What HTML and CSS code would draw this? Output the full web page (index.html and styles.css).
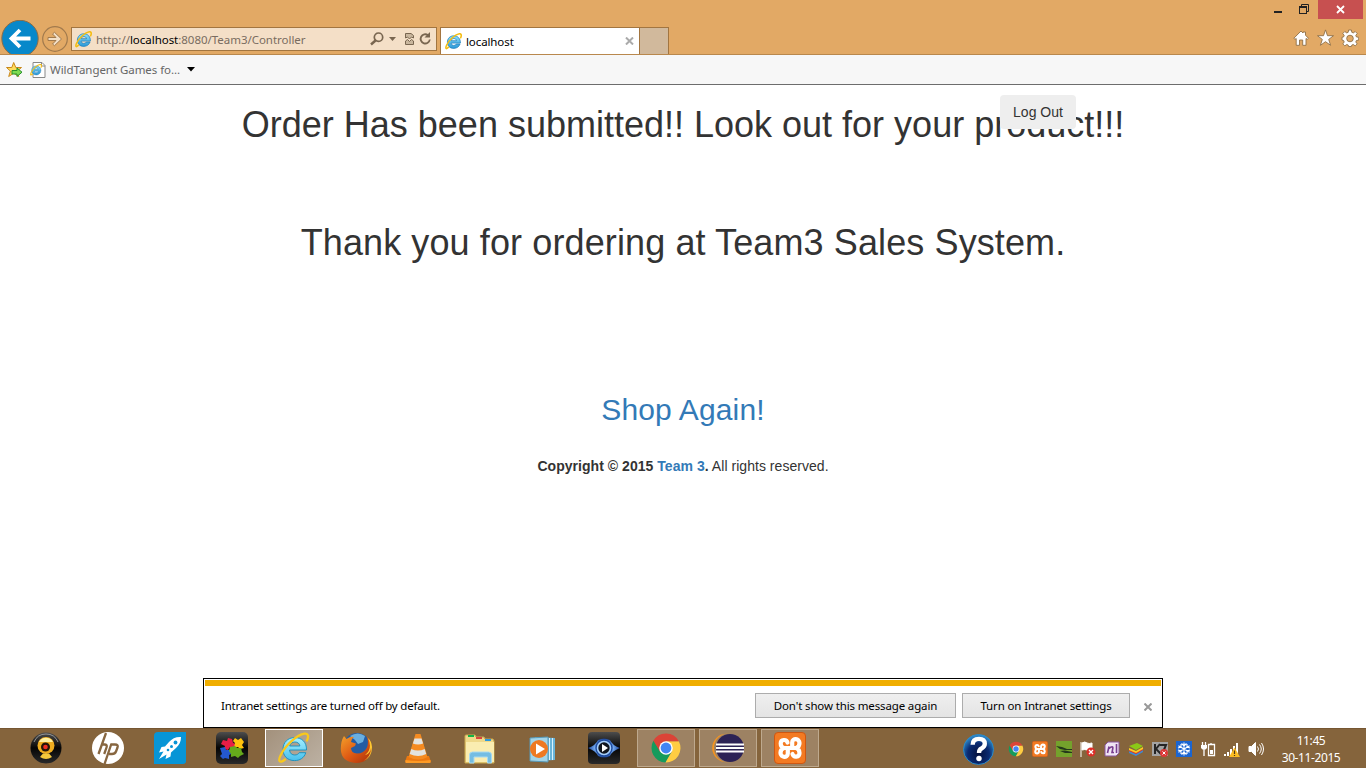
FILE: index.html
```html
<!DOCTYPE html>
<html lang="en">
<head>
<meta charset="utf-8">
<title>localhost</title>
<link rel="stylesheet" href="styles.css">
</head>
<body>
<svg class="defs" width="0" height="0" aria-hidden="true">
  <defs>
    <linearGradient id="gBlue" x1="0" y1="0" x2="0" y2="1"><stop offset="0" stop-color="#8ee0fa"/><stop offset="1" stop-color="#2998d8"/></linearGradient>
    <linearGradient id="gCyan" x1="0" y1="0" x2="0" y2="1"><stop offset="0" stop-color="#a5f0ff"/><stop offset="1" stop-color="#48c0ec"/></linearGradient>
    <linearGradient id="gFox" x1="0" y1="0" x2="1" y2="1"><stop offset="0" stop-color="#f4a02a"/><stop offset=".5" stop-color="#df5b14"/><stop offset="1" stop-color="#a82f0a"/></linearGradient>
    <linearGradient id="gBlack" x1="0" y1="0" x2="0" y2="1"><stop offset="0" stop-color="#4d4d4d"/><stop offset=".5" stop-color="#050505"/><stop offset="1" stop-color="#2a2a2a"/></linearGradient>
    <radialGradient id="gHelp" cx=".5" cy=".65" r=".6"><stop offset="0" stop-color="#04103c"/><stop offset=".6" stop-color="#0a2b72"/><stop offset="1" stop-color="#2b83c6"/></radialGradient>
    <radialGradient id="gEye"><stop offset="0" stop-color="#fff"/><stop offset=".6" stop-color="#6fa6ee"/><stop offset="1" stop-color="#173b8c"/></radialGradient>
  </defs>
  <symbol id="ie" viewBox="0 0 32 32">
    <path d="M29 19H11.500c.4 3 2.500 4.300 5 4.300 2.200 0 3.800-.8 4.700-2.500h7.100c-1.800 5.300-6.300 8.200-12 8.200C9 29 4.500 24 4.500 17.300 4.500 10.300 9.500 5.300 16.500 5.300c7.500 0 12.700 5 12.500 13.700zM11.700 14.500h10c-.3-2.400-2.200-4-5-4s-4.600 1.500-5 4z" fill="url(#gBlue)" stroke="#1b7dbb" stroke-width="1.400"/>
    <path d="M6.500 26.500c-4 5-6.500 3.300-3.500-3.500C8 12 20 2.500 27 1.500c4-.5 4.300 3 2.500 7.500" fill="none" stroke="#f4bd13" stroke-width="3" stroke-linecap="round"/>
  </symbol>
  <symbol id="ieBig" viewBox="0 0 32 32">
    <path d="M28.500 18H11.500c.4 3.500 2.600 5 5.200 5 2.200 0 3.600-.9 4.500-2.300h6.600c-1.700 5.200-6 7.900-11.300 7.900C9.500 28.600 5 24 5 17.300 5 10.500 9.800 5.600 16.600 5.600c7.300 0 12.100 4.400 11.900 12.400zM11.700 14h10.200c-.3-2.500-2.300-4-5-4s-4.700 1.500-5.200 4z" fill="url(#gCyan)" stroke="#168dbd" stroke-width=".9"/>
    <path d="M7 27.500c-5.500 4.500-7.500 1.500-4-5C8 12.500 19 3 26.500 1.700c4-.6 4.300 2.800 2.500 6.800" fill="none" stroke="#f9c81c" stroke-width="2.300" stroke-linecap="round"/>
  </symbol>
  <symbol id="chrome" viewBox="0 0 32 32">
    <path d="M16 16L3.400 8.800A14.500 14.500 0 0 0 15.500 30.500l6.200-11z" fill="#159b5c"/>
    <path d="M16 9.200h12.800A14.500 14.500 0 0 1 15.500 30.500l6.400-11z" fill="#ffcd42"/>
    <path d="M3.400 8.800L9.900 19.500 16 16V9.200h12.800a14.500 14.500 0 0 0-25.400-.4z" fill="#db4437"/>
    <circle cx="16" cy="16" r="6.800" fill="#fff"/><circle cx="16" cy="16" r="5.400" fill="#4285f4"/>
  </symbol>
  <symbol id="xampp" viewBox="0 0 32 32">
    <rect x=".5" y=".5" width="31" height="31" rx="3.500" fill="#f37a22" stroke="#ce5712"/>
    <g fill="none" stroke="#fff" stroke-width="4.200" stroke-linecap="round" stroke-linejoin="round">
      <path d="M13.500 10.500C12.500 7 6.700 7 6.700 11.500c0 2.500 1.300 4 3.300 4.500-2.300.8-3.500 2.700-3.500 5 0 5 7.300 5 7.300.5v-4"/>
      <path d="M18.200 14.500v-4c0-4.500 7.300-4.500 7.300.5 0 2.500-1.200 4.200-3.500 5 2 .5 3.500 2.300 3.500 5 0 4.500-6 4.700-7 1"/>
      <path d="M10 16h12"/>
    </g>
  </symbol>
</svg>

<div class="screen">
  <header class="browser">
    <div class="captions">
      <svg class="min" width="8" height="3"><rect width="8" height="2" fill="#222"/></svg>
      <svg class="restore" width="11" height="11" viewBox="0 0 11 11" fill="none" stroke="#222"><path d="M2.500 2V.5h7v7H8"/><rect x=".5" y="2.500" width="7" height="7"/><path d="M0 3.500h8"/></svg>
      <span class="close"><svg width="9" height="9" viewBox="0 0 9 9" stroke="#fff" stroke-width="1.800"><path d="M1 1l7 7M8 1L1 8"/></svg></span>
    </div>
    <div class="nav">
      <svg class="back" width="39" height="34" viewBox="0 0 39 34"><circle cx="19" cy="18.500" r="18.200" fill="#0788ca" stroke="#8c6c45"/><path d="M29.500 18.500H11.500M19 10l-8.500 8.500 8.500 8.500" fill="none" stroke="#fff" stroke-width="3.800"/></svg>
      <svg class="forward" width="26" height="26" viewBox="0 0 26 26"><circle cx="13" cy="13" r="12.300" fill="none" stroke="#a17a4d" stroke-width="1.200"/><path d="M6 11.500h8L10.500 8l2-1.700L19.500 13l-7 6.700-2-1.700 3.500-3.500H6z" fill="#f3dfc6" stroke="#a17a4d"/></svg>
      <div class="address">
        <svg class="favicon" width="17" height="17"><use href="#ie"/></svg>
        <span class="url">http://<b>localhost</b>:8080/Team3/Controller</span>
        <svg class="tools" width="64" height="16" viewBox="0 0 64 16" fill="none" stroke="#796650">
          <circle cx="8.500" cy="6.200" r="4.200" stroke-width="1.700"/><path d="M5.500 9.500L1 13.500" stroke-width="2.400"/>
          <path d="M19 6h7l-3.500 4z" fill="#796650" stroke="none"/>
          <path d="M35.500 7V2.500h5.500l2.500 2V7l-2-1-2 2-2-2zM35.500 10l2-1.500 2 2 2-2 2 1.500v3.500h-8z" fill="#c9b69d"/>
          <path d="M58 4.200A4.600 4.600 0 1 0 59.800 8.500" stroke-width="1.800"/><path d="M60 1v5.500h-5.500z" fill="#796650" stroke="none"/>
        </svg>
      </div>
      <div class="tab"><svg class="favicon" width="17" height="17"><use href="#ie"/></svg><span>localhost</span><svg class="x" width="9" height="8" viewBox="0 0 9 8" stroke="#aaa" stroke-width="2"><path d="M1 .5l7 7M8 .5l-7 7"/></svg></div>
      <div class="newtab"></div>
      <svg class="commands" width="66" height="18" viewBox="0 0 66 18" fill="#fff" stroke="#8e7048" stroke-width=".9">
        <path d="M.8 9.300L8 2l2 2V3h2.500v3.200l3 3.100-1.200 1-1.300-.8v6.800H9.700V11H6.500v5.300H3.200V9.500L2 10.300z"/>
        <path d="M32.500.9l2 5.800h6l-4.800 3.700 1.900 5.900-5.100-3.600-5.100 3.600 1.900-5.900-4.800-3.700h6z"/>
        <path fill-rule="evenodd" d="M55.600 1h2.800l.4 2.300 1.500.6 1.900-1.400 2 2-1.400 1.900.6 1.500 2.300.4v2.800l-2.300.4-.6 1.500 1.400 1.900-2 2-1.900-1.400-1.500.6-.4 1.400h-2.800l-.4-1.400-1.500-.6-1.900 1.400-2-2 1.400-1.900-.6-1.500-1.600-.4V8.300l1.600-.4.6-1.500-1.400-1.900 2-2 1.900 1.400 1.500-.6zM57 6.200a3.300 3.300 0 1 0 0 6.600 3.300 3.300 0 0 0 0-6.600z"/>
      </svg>
    </div>
  </header>

  <div class="favorites">
    <svg width="18" height="18" viewBox="0 0 18 18"><path d="M7.700 1.500l2.100 5h5.700l-4.300 3.600 1.600 5.400-5.100-3.300-5 3.300 1.700-5.400L.5 6.500h5.300z" fill="#fedc5b" stroke="#c9871b"/><path d="M6 9.500h5V7l5 4.200-5 4.300V13H6z" fill="#7ddb51" stroke="#27902c"/></svg>
    <svg width="16" height="16" viewBox="0 0 16 16"><path d="M3 .5h9l3 3v12H3z" fill="#fff" stroke="#888"/><path d="M11.500.5v3.500H15" fill="none" stroke="#888"/><use href="#ie" x="0" y="2" width="12" height="12"/></svg>
    <span class="link">WildTangent Games fo...</span>
    <svg width="8" height="5"><path d="M0 0h8L4 4.500z"/></svg>
  </div>

  <main class="page">
    <button class="logout">Log Out</button>
    <h1>Order Has been submitted!! Look out for your product!!!</h1>
    <h1 class="thanks">Thank you for ordering at Team3 Sales System.</h1>
    <h2><a>Shop Again!</a></h2>
    <p class="copyright"><strong>Copyright © 2015 <a>Team 3</a>.</strong> All rights reserved.</p>
    <div class="notice">
      <div class="stripe"></div>
      <div class="notice-row">
        <span class="message">Intranet settings are turned off by default.</span>
        <button class="dont">Don't show this message again</button>
        <button class="turn">Turn on Intranet settings</button>
        <svg width="8" height="8" viewBox="0 0 8 8" stroke="#999" stroke-width="2"><path d="M.5.5l7 7M7.500.5l-7 7"/></svg>
      </div>
    </div>
  </main>

  <footer class="taskbar">
    <div class="apps">
      <span><svg viewBox="0 0 32 32"><circle cx="16" cy="16" r="15.500" fill="url(#gBlack)"/><path d="M4 10a13 13 0 0 1 24 0" fill="none" stroke="#aaa" stroke-width=".8"/><circle cx="16" cy="13.500" r="8.500" fill="#edac20"/><path d="M9 10a8 8 0 0 1 14 0" fill="#fff1a0"/><circle cx="15.500" cy="15" r="4.500" fill="#261708"/><circle cx="15.500" cy="15" r="2.300" fill="#ef2f22"/><path d="M13 21.500h6l3 3.500q-6 4-12 0z" fill="#f4c83c"/></svg></span>
      <span><svg viewBox="0 0 32 32"><circle cx="16" cy="16" r="16" fill="#fff"/><path d="M14 1L6.500 22M9.500 12.500h3q3 0 2 3L12.200 22M19.500 11.500L12.500 32M19 12.500h4q3.500 0 2.500 3l-1.500 4q-1 2.500-4 2.500h-3" fill="none" stroke="#876640" stroke-width="2.300"/></svg></span>
      <span><svg viewBox="0 0 32 32"><path d="M4 0h28v29q0 3-3 3H0V4q0-4 4-4z" fill="#0795d6"/><path d="M27 5c-5-.3-9 1.500-12 5L11 14.500 7.500 15 5 20.500l4.500-1L5 27l7.500-4.500-1 4.500 5-2.500.5-4 5-4.500c3.500-3.500 5-6.500 5-11z" fill="#fff"/><g fill="#0795d6"><circle cx="21.500" cy="10.500" r="1.900"/><circle cx="17.500" cy="14.500" r="1.500"/><circle cx="14" cy="18" r="1.300"/></g></svg></span>
      <span><svg viewBox="0 0 32 32"><rect width="32" height="32" rx="5" fill="url(#gBlack)"/><path d="M7 8l4 1 1-3 4 1 1 4 3 1-2 4-4-1-2 3-4-1 1-3-4-2z" fill="#e81d46"/><path d="M19 6l3 2 3-2 3 4-2 3 2 3-4 1-2-2-4 1 1-5-2-2z" fill="#ffc20d"/><path d="M4 16l5-1 1 3 4 0 1 4-2 1 0 4-4-1-2 1-3-3 2-2z" fill="#2458ce"/><path d="M14 15l5-1 2 2 4 0 1 4 2 2-4 2-2 2-3-2-4 1 0-3-2-3z" fill="#65a91b"/></svg></span>
      <span class="active"><svg viewBox="0 0 32 32"><use href="#ieBig"/></svg></span>
      <span><svg viewBox="0 0 32 32"><circle cx="17" cy="14.500" r="13.500" fill="#245ca3"/><path d="M10 4q8-5 15 0l-2 6-5 2-3-4z" fill="#6aafdf"/><path d="M4 4l2.500 3q4-3 7.500-2-3 2-3 5l5 1.500-1 2.500-4 2q0 5 6 5.500 7 0 10-6 2-5 0-11 4.500 5 4.500 12Q30 31 16 31 1 30 .8 17 .8 9 4 4z" fill="url(#gFox)"/><path d="M28 6q5 11-3 17 5-1 6-7 0 9-8 13 9-3 9-14-.5-6-4-9z" fill="#ffc831"/></svg></span>
      <span><svg viewBox="0 0 32 32"><path d="M5 24h22l2 6H3z" fill="#ec7810"/><path d="M13.500 2h5l7 23q-9 5-19 0z" fill="#f58b21"/><path d="M12.500 6.500h7l1.600 5q-5 2-10.200 0zM9.300 17q6.700 3 13.400 0l1.500 5q-8 4-16.500 0z" fill="#e3e3df"/><path d="M3.500 28q12.500 2 25 0v3h-25z" fill="#ff9b24"/></svg></span>
      <span><svg viewBox="0 0 32 32"><path d="M1 4q0-1 1-1h9l1 2h8l1 2h8l1 2v22H1z" fill="#efd98a" stroke="#c9a84f"/><path d="M4 4h6" stroke="#12b347" stroke-width="2"/><path d="M12 6h6" stroke="#d9453e" stroke-width="2"/><path d="M21 8h6" stroke="#2c99dd" stroke-width="2"/><path d="M2 10h28v20H2z" fill="#faedb1"/><path d="M5.500 31V23q0-3 3-3h16q3 0 3 3v8h-4v-6H10v6z" fill="#74bde3" stroke="#a8daf1"/></svg></span>
      <span><svg viewBox="0 0 32 32"><path d="M9 5l20 1v22l-20 1z" fill="#69b5da"/><path d="M26.500 6v22M23.500 6v22" stroke="#d8f3ff"/><path d="M4 6l18-1v25l-18-1z" fill="#a2d4e8" stroke="#5799b7"/><circle cx="13" cy="17" r="9" fill="#ee7922"/><path d="M10 11.500l9 5.500-9 5.500z" fill="#fff"/></svg></span>
      <span><svg viewBox="0 0 32 32"><rect width="32" height="32" rx="4" fill="url(#gBlack)"/><path d="M0 16Q8 13 10 8q6-3 12 0 2 5 10 8-8 3-10 8-6 3-12 0-2-5-10-8z" fill="url(#gEye)"/><circle cx="16" cy="16" r="8" fill="#a7cffb" stroke="#1f4ca0" stroke-width="1.500"/><circle cx="16" cy="16" r="5.700" fill="#10151f"/><path d="M14 12l6 4-6 4z" fill="#fff"/></svg></span>
      <span class="open"><svg viewBox="0 0 32 32"><use href="#chrome"/></svg></span>
      <span class="open"><svg viewBox="0 0 32 32"><circle cx="14.500" cy="16" r="14.300" fill="#f7941e"/><circle cx="16.500" cy="16" r="14.500" fill="#9d8263"/><circle cx="18" cy="16" r="14" fill="#2c2255"/><path d="M4 12.500h28M4 16h28M4 19.500h28" stroke="#fff" stroke-width="1.900"/></svg></span>
      <span class="open"><svg viewBox="0 0 32 32"><use href="#xampp"/></svg></span>
    </div>
    <svg class="help" viewBox="0 0 32 32"><circle cx="16" cy="16" r="15.500" fill="url(#gHelp)" stroke="#2d8bc5"/><path d="M10 11q0-6 6.500-6 6 0 6 5 0 3-3.500 5-2.500 1.300-2.500 4.500" fill="none" stroke="#fff" stroke-width="4.500"/><circle cx="16.500" cy="25.200" r="2.800" fill="#fff"/></svg>
    <div class="tray">
      <svg viewBox="0 0 32 32"><use href="#chrome"/></svg>
      <svg viewBox="0 0 32 32"><use href="#xampp"/></svg>
      <svg viewBox="0 0 16 16"><path d="M0 0h16v16H0z" fill="#74a22c"/><path d="M0 5l6 1 5 2h5v1H9L4 8zM4 10l5-.5 7 1.500v1H9z" fill="#25391b"/></svg>
      <svg viewBox="0 0 16 16"><path d="M1 1v15M2 2q3-2 5 0 2 1 5 0v7q-3 1-5 0-2-1-5 0z" fill="#fff" stroke="#fff"/><circle cx="11" cy="11" r="4.500" fill="#dc2f28"/><path d="M9 9l4 4m0-4l-4 4" stroke="#fff" stroke-width="1.300"/></svg>
      <svg viewBox="0 0 16 16"><path d="M4 1h11v11l-3 3H1V4z" fill="#f0e4f4" stroke="#8a569d"/><path d="M12.500 3v9M5 5.500L3.500 12M4.800 7.500q4.500-3.500 4 0L8 11.500h2" fill="none" stroke="#793e90" stroke-width="1.600"/></svg>
      <svg viewBox="0 0 16 16"><path d="M1 10l7 3 7-4v2l-7 4-7-3z" fill="#4089cf"/><path d="M1 8l7 3 7-4v2l-7 4-7-3z" fill="#e03830"/><path d="M1 7l7 3 7-4v2l-7 4-7-3z" fill="#f7cf21"/><path d="M1 5l8-3 6 3-7 4z" fill="#8bc817"/></svg>
      <svg viewBox="0 0 16 16"><path d="M0 1h16v14H0z" fill="#a3a3a3"/><path d="M3 3v10M8 3L4 8l5 5M8 4h6l-3 7" fill="none" stroke="#252525" stroke-width="2"/><circle cx="12" cy="12" r="4" fill="#dc3837"/><path d="M10.500 10.500l3 3m0-3l-3 3" stroke="#fff"/></svg>
      <svg viewBox="0 0 16 16"><path d="M0 0h16v16H0z" fill="#1b65d0"/><path d="M8 1.500v13M2.400 4.700l11.200 6.600M2.400 11.300l11.200-6.600M5.500 2.500L8 5l2.500-2.500M5.500 13.500L8 11l2.500 2.500M2 7l3-1V3M14 7l-3-1V3M2 9l3 1v3M14 9l-3 1v3" fill="none" stroke="#fff" stroke-width="1.100"/></svg>
      <svg viewBox="0 0 16 16" fill="none" stroke="#fff"><path d="M2.500 1v3M5.500 1v3M4 8v7M11 2v2" stroke-width="1.300"/><path d="M1 4h6v3L5.500 8.500h-3L1 7z" fill="#fff" stroke="none"/><path d="M8.500 3.500h6v11h-6z" stroke-width="1.300"/><path d="M10 9h3v4h-3z" fill="#fff" stroke="none"/></svg>
      <svg viewBox="0 0 16 16"><path d="M0 13h2v2H0zM3 11h2v4H3zM6 8h2v7H6zM9 5h2v10H9zM12 2h2v13h-2z" fill="#fff"/><path d="M10.500 6.500L16 16H5z" fill="#fcbd22"/><path d="M10.500 9.500v3.500M10.500 14v1" stroke="#4f3613" stroke-width="1.200"/></svg>
      <svg viewBox="0 0 16 16" fill="none" stroke="#fff"><path d="M1 5.500h2.500l4-4v13l-4-4H1z" fill="#fff"/><path d="M9.500 5.500q2 2.500 0 5M11.500 3.500q3.500 4.500 0 9M13.500 2q4 6 0 12" stroke-width="1"/></svg>
    </div>
    <div class="clock"><span class="time">11:45</span><span class="date">30-11-2015</span></div>
  </footer>
</div>
</body>
</html>
```

FILE: styles.css
```css
* { box-sizing: border-box; }
body { margin: 0; overflow: hidden; }
svg { display: block; flex: none; }
.defs { position: absolute; }
.screen { width: 1366px; height: 768px; display: flex; flex-direction: column; background: #fff; font-family: "Noto Sans", "Open Sans", sans-serif; font-size: 12px; }

.browser { height: 55px; background: #e2a965; border-bottom: 1px solid #b9884d; }
.captions { height: 20px; display: flex; justify-content: flex-end; padding-right: 3px; }
.min { margin: 11px 17px 0 0; }
.restore { margin: 4px 8px 0 0; }
.close { width: 45px; height: 19px; background: #c75050; display: flex; align-items: center; justify-content: center; }
.nav { height: 34px; display: flex; align-items: flex-start; }
.back { margin-left: 1px; }
.forward { margin: 6px 3px 0 2px; }
.address { width: 366px; height: 24px; margin: 7px 3px 0 0; border: 1px solid #a27540; background: #f4dfc7; display: flex; align-items: center; padding-left: 3px; }
.url { width: 286px; margin-left: 4px; color: #796c60; font-size: 11.500px; letter-spacing: -.03px; white-space: nowrap; }
.url b { font-weight: 400; color: #000; }
.tools { margin-left: -12px; }
.tab { width: 200px; height: 27px; margin-top: 7px; border: 1px solid #a27540; border-bottom: 0; background: #fff; display: flex; align-items: center; padding-left: 4px; }
.tab span { width: 158px; margin-left: 4px; font-size: 11.500px; letter-spacing: -.1px; }
.tab .x { margin-left: 1px; }
.newtab { width: 29px; height: 27px; margin-top: 7px; border: 1px solid #a27540; border-width: 1px 1px 0 0; background: #d1b99c; }
.commands { margin: 9px 7px 0 auto; }

.favorites { height: 30px; background: #f7f7f7; border-bottom: 1px solid #6d6d6d; display: flex; align-items: center; padding-left: 6px; gap: 6px; }
.link { width: 131px; margin-left: -2px; font-size: 11.500px; letter-spacing: -.05px; color: #666; white-space: nowrap; }

.page { position: relative; height: 643px; padding-top: 20px; display: flex; flex-direction: column; align-items: center; font-family: "Liberation Sans", Arial, sans-serif; color: #333; }
.page h1 { margin: 0; font-size: 36px; font-weight: 400; line-height: 40px; white-space: nowrap; }
.page .thanks { margin-top: 78px; letter-spacing: .11px; }
.page h2 { margin: 130px 0 0; font-size: 30px; font-weight: 400; line-height: 33px; letter-spacing: .15px; }
.page a { color: #337ab7; }
.copyright { margin: 30px 0 0; font-size: 14px; line-height: 20px; letter-spacing: .04px; }
.logout { position: absolute; left: 1000px; top: 10px; width: 76px; height: 34px; border: 0; border-radius: 4px; background: #eee; font: 14px "Liberation Sans", Arial, sans-serif; color: #333; padding: 0; }

.notice { width: 960px; height: 50px; margin-top: auto; border: 1px solid #000; background: #fff; padding: 1px; font-family: "Noto Sans", "Open Sans", sans-serif; color: #000; }
.stripe { height: 6px; background: #f0ae00; }
.notice-row { height: 40px; display: flex; align-items: center; padding: 0 9px 1px 16px; font-size: 11.500px; }
.message { flex: 1; letter-spacing: -.2px; }
.notice button { height: 25px; padding: 0; border: 1px solid #acacac; background: linear-gradient(#efefef, #e4e4e4); font: 11.500px "Noto Sans", "Open Sans", sans-serif; letter-spacing: -.14px; color: #000; white-space: nowrap; }
.notice .dont { width: 201px; margin-right: 6px; }
.notice .turn { width: 168px; margin-right: 14px; }
.notice-row svg { margin-top: 2px; }

.taskbar { height: 40px; background: #85643c; border-top: 1px solid #765632; display: flex; color: #fff; }
.apps { display: flex; gap: 4px; padding-left: 17px; width: 963px; flex: none; }
.apps span { width: 58px; height: 38px; display: flex; align-items: center; justify-content: center; border: 1px solid transparent; }
.apps svg { width: 32px; height: 32px; }
.apps .active { background: linear-gradient(135deg, #a3917c, #bcb1a3); border-color: #fff; }
.apps .open { background: #9d8263; border-color: #bea98e; }
.help { width: 31px; height: 31px; margin: 5px 14px 0 0; }
.tray { display: flex; gap: 8px; padding-top: 12px; }
.tray svg { width: 16px; height: 16px; }
.clock { width: 94px; display: flex; flex-direction: column; align-items: center; padding-top: 3px; font-size: 12px; line-height: 17px; }
.time, .date { letter-spacing: -.4px; }
```
